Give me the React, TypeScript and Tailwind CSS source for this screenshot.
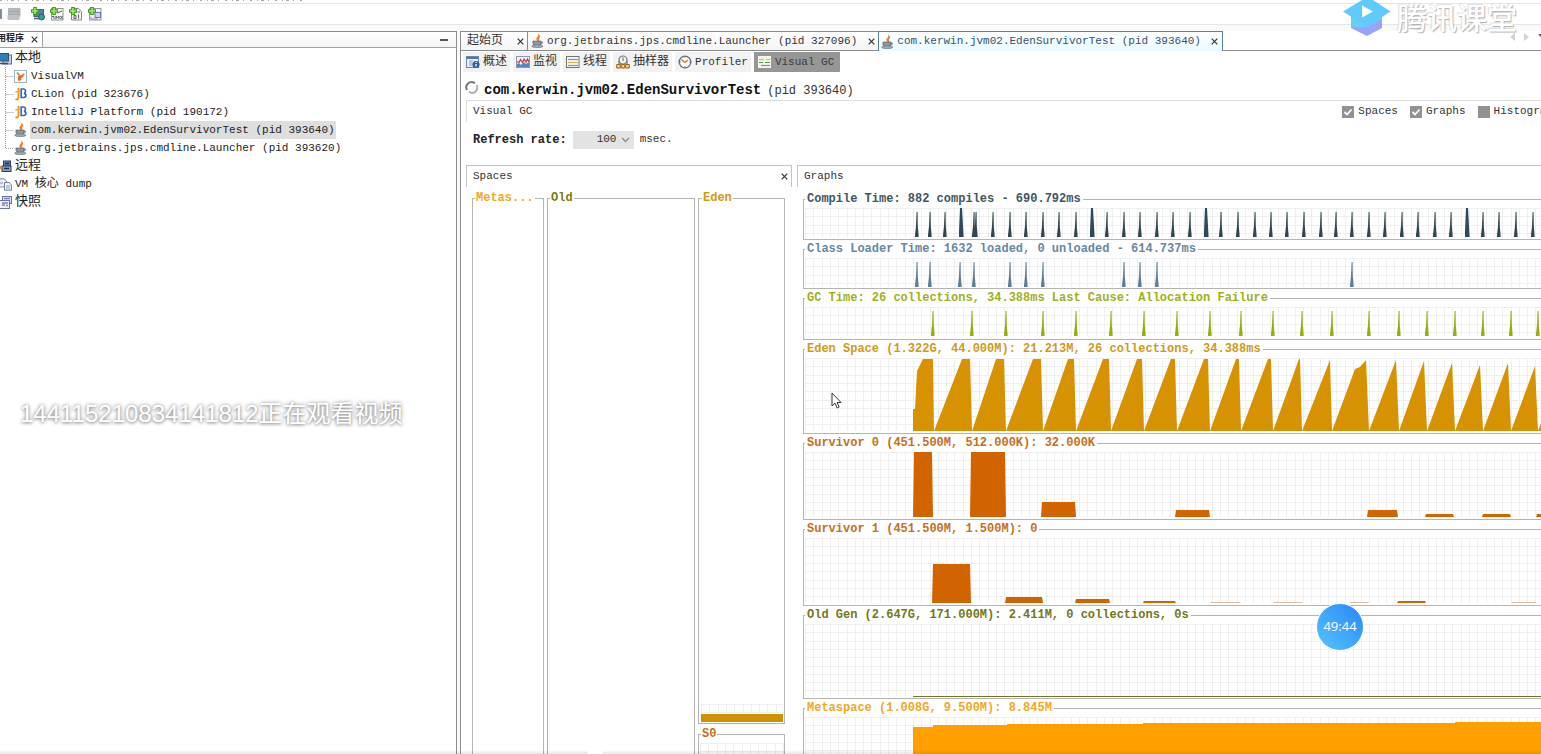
import type { ReactNode } from "react";

const LINE = "border-[#b4b4b4]";

/* ---------- icons ---------- */

const JavaIcon = () => (
  <svg width="13" height="14" viewBox="0 0 13 14" className="shrink-0">
    <path d="M7.5 0.5C9 2 5 3.6 6 5.4c.5.8 1 1.2.8 1.8C9 5.8 7 5 8 3.8 8.8 3 9 1.6 7.5.5z" fill="#ee7a22" stroke="#ee7a22" />
    <path d="M2 7.2h8v1.6c0 1.8-1.6 2.8-4 2.8s-4-1-4-2.8z" fill="#8d9aa5" stroke="#5c6a76" />
    <path d="M10 8c2-.6 2.6 1.4-.6 2" fill="none" stroke="#5c6a76" />
    <ellipse cx="6.3" cy="12.2" rx="5.6" ry="1.3" fill="#a4adb4" stroke="#66727c" strokeWidth="0.7" />
  </svg>
);

const JetBrainsIcon = () => (
  <svg width="13" height="14" viewBox="0 0 13 14" className="shrink-0">
    <path d="M4.5 1v9c0 2-1.5 3-3 2.2" fill="none" stroke="#f09a1c" strokeWidth="2" />
    <path d="M1.5 5.5c2-2 3 0 4.500-1.500" fill="none" stroke="#f0b040" strokeWidth="1.6" />
    <path d="M7.2 2v8.5h2.4c3 0 3-3.8.4-4.2 2.2-.6 2-4.3-.6-4.3z" fill="none" stroke="#3a69b5" strokeWidth="1.7" />
  </svg>
);

const VisualVmIcon = () => (
  <svg width="13" height="13" viewBox="0 0 13 13" className="shrink-0">
    <rect x="0.5" y="0.5" width="12" height="12" fill="#fff" stroke="#9db4c8" />
    <path d="M3 2.500l2.400 2.700M10.400 3.800L8 5.800" stroke="#f0651c" strokeWidth="1.4" />
    <path d="M4.500 5.500l4.500-.5.6 2-2.200.6-.2 2.400-2.400 1.200-1-1.600z" fill="#f0651c" />
  </svg>
);

const LocalIcon = () => (
  <svg width="12" height="13" viewBox="0 0 12 13" className="shrink-0">
    <rect x="3" y="3" width="8.5" height="9" fill="#c9d3e4" stroke="#5b6f95" />
    <rect x="-1" y="1.5" width="9.5" height="7.5" fill="#2d7fb5" stroke="#3c4d6c" />
    <path d="M0 11.5h8" stroke="#3c4d6c" strokeWidth="1.6" />
  </svg>
);

const RemoteIcon = () => (
  <svg width="12" height="13" viewBox="0 0 12 13" className="shrink-0">
    <rect x="3.5" y="1" width="7" height="5" fill="#5f7fae" stroke="#2d3e5e" />
    <rect x="2" y="6" width="9" height="5.5" fill="#8ea3c4" stroke="#2d3e5e" />
    <path d="M4 8.5h5M5 3.5h4" stroke="#1d2c4a" strokeWidth="1.4" />
    <circle cx="0.8" cy="7.5" r="1.6" fill="#d58a2c" />
  </svg>
);

const DumpIcon = () => (
  <svg width="12" height="13" viewBox="0 0 12 13" className="shrink-0">
    <path d="M-1 .8h5L6.500 3v6H-1z" fill="#e9edf4" stroke="#8490a8" />
    <path d="M4.500 4.500h4.500l2.400 2.300v5.400H4.500z" fill="#f4f6fa" stroke="#707d98" />
    <path d="M6 8h4M6 10h4M0 5h3" stroke="#8a97b4" />
  </svg>
);

const SnapshotIcon = () => (
  <svg width="12" height="13" viewBox="0 0 12 13" className="shrink-0">
    <rect x="2.500" y="0.500" width="9" height="7" fill="#dfe4f6" stroke="#6a73a8" />
    <rect x="-0.500" y="4.500" width="10" height="8" fill="#eef0fb" stroke="#6a73a8" />
    <path d="M2 7h6M2 9h3M6 9.500h2M4 2.500h6" stroke="#7b84b8" strokeWidth="1.4" />
  </svg>
);

const AddBadge = () => (
  <>
    <path d="M4 0v8M0 4h8" stroke="#3f9a1e" strokeWidth="3.600" />
    <path d="M4 1v6M1 4h6" stroke="#a8ec62" strokeWidth="1.600" />
  </>
);

const AddHostIcon = () => (
  <svg width="14" height="14" viewBox="0 0 14 14">
    <rect x="3" y="2.500" width="9.500" height="7" fill="#4c83b6" stroke="#4d5f74" />
    <path d="M3 11.500h5" stroke="#4d5f74" strokeWidth="1.6" />
    <circle cx="10.500" cy="10" r="3" fill="#3f9a8e" stroke="#2c5c72" />
    <AddBadge />
  </svg>
);

const AddJmxIcon = () => (
  <svg width="14" height="14" viewBox="0 0 14 14">
    <rect x="1.500" y="1.500" width="11.500" height="11.500" fill="#f4f6f2" stroke="#909890" />
    <path d="M2 9.500h2v2.500M6 12V9l1.500 2L9 9v3M10.500 9l2 3M12.500 9l-2 3M7 6l5-2" fill="none" stroke="#55606a" />
    <AddBadge />
  </svg>
);

const AddDumpIcon = () => (
  <svg width="14" height="14" viewBox="0 0 14 14">
    <path d="M2.500 1.500h7l3 3v8.500h-10z" fill="#f1f4f0" stroke="#7e8a84" />
    <path d="M5 8.500h2v3H5zM9.500 7.500v4M8.500 5h2.500" fill="none" stroke="#58635e" />
    <AddBadge />
  </svg>
);

const AddSnapshotIcon = () => (
  <svg width="14" height="14" viewBox="0 0 14 14">
    <rect x="1.500" y="1.500" width="11.500" height="11.500" fill="#f2f3fa" stroke="#9298ac" />
    <rect x="7" y="5.500" width="5.500" height="5" fill="#cdd5ee" stroke="#6a78a8" />
    <path d="M3 9.500v2.500h7" fill="none" stroke="#8a93b0" />
    <AddBadge />
  </svg>
);

const SaveAllIcon = () => (
  <svg width="14" height="14" viewBox="0 0 14 14">
    <rect x="1" y="1" width="12.500" height="9" rx="1" fill="#b2b5ba" />
    <rect x="0.500" y="8" width="12" height="5" rx="1" fill="#c0c2c6" />
    <path d="M1 4.500h12M1 7.500h12" stroke="#a6aab0" />
  </svg>
);

const OverviewIcon = () => (
  <svg width="14" height="14" viewBox="0 0 14 14">
    <rect x="0.500" y="1.500" width="12" height="11" fill="#eaf0f7" stroke="#6f87a6" />
    <path d="M1 3h11" stroke="#4c75a9" strokeWidth="2" />
    <path d="M3 6h4M3 8h3M3 10h3" stroke="#8da0ba" />
    <circle cx="10" cy="9.500" r="3.600" fill="#2b5da6" />
    <path d="M10 9v2.500M10 7v1" stroke="#fff" strokeWidth="1.3" />
  </svg>
);

const MonitorIcon = () => (
  <svg width="14" height="14" viewBox="0 0 14 14">
    <rect x="0.500" y="1.500" width="13" height="11" fill="#f0f3f7" stroke="#8a9bb0" />
    <path d="M1 12V9l2-1 2 2 3-3 2 2 3-2v5z" fill="#4f86c4" />
    <path d="M1 6.500l2 1 1.500-3 2 3L8 4l2 3 1.500-3L13 7" fill="none" stroke="#d33f35" strokeWidth="1.3" />
  </svg>
);

const ThreadsIcon = () => (
  <svg width="14" height="14" viewBox="0 0 14 14">
    <rect x="0.500" y="1.500" width="12.500" height="11" fill="#f6f7f5" stroke="#6c7680" />
    <path d="M2 4.500h10" stroke="#7d93b8" strokeWidth="1.2" />
    <path d="M2 7.500h10" stroke="#d8b63a" strokeWidth="1.2" />
    <path d="M2 10.500h10" stroke="#7aa858" strokeWidth="1.2" />
  </svg>
);

const SamplerIcon = () => (
  <svg width="14" height="14" viewBox="0 0 14 14">
    <path d="M3 6v4M11 6v4" stroke="#b97a1e" strokeWidth="1.4" />
    <circle cx="7" cy="5" r="4" fill="#f5f5f0" stroke="#6f7680" strokeWidth="1.2" />
    <path d="M7 2.500V6" stroke="#4c5662" />
    <path d="M.7 9.500h3.600v3.500H.7zM5.200 9.500h3.600v3.500H5.200zM9.700 9.500h3.600v3.500H9.700z" fill="#f0d08a" stroke="#9a661c" />
  </svg>
);

const ProfilerIcon = () => (
  <svg width="14" height="14" viewBox="0 0 14 14">
    <circle cx="7" cy="7" r="5.800" fill="#fdfdfb" stroke="#5a6a80" strokeWidth="1.3" />
    <path d="M7 7.500L3.500 4.500M7 7.500l3-2.500" stroke="#e07b28" strokeWidth="1.6" />
    <path d="M7 2v1M7 11v1M2 7h1M11 7h1" stroke="#8a95a5" />
  </svg>
);

const VisualGcIcon = () => (
  <svg width="13" height="12" viewBox="0 0 13 12">
    <rect width="13" height="12" fill="#f7f7f2" />
    <path d="M1 3.500h5M8 3.500h4" stroke="#e3c83c" strokeWidth="1.4" />
    <path d="M1 6.500h4M7 6.500h5" stroke="#4c9a58" strokeWidth="1.2" />
    <path d="M3 9.500h9" stroke="#8e9a3c" strokeWidth="1.2" />
  </svg>
);

const CloseButton = ({ label }: { label: string }) => (
  <button type="button" aria-label={label} className="flex size-3 shrink-0 items-center justify-center text-[#333]">
    <svg width="7" height="7" viewBox="0 0 7 7">
      <path d="M.7.700l5.600 5.600M6.300.700L.700 6.300" stroke="currentColor" strokeWidth="1.200" />
    </svg>
  </button>
);

/* ---------- charts ---------- */

const STEP = 8.3;

// thin grid lines, rounded to whole pixels so that they stay crisp
const gridPath = (width: number, height: number) => {
  let d = "";
  for (let i = 0; i * STEP < width; i++) d += `M${Math.round(i * STEP) + 1.5} 0V${height}`;
  for (let i = 0; i * STEP < height; i++) d += `M1 ${Math.round(i * STEP) + 0.5}H${width}`;
  return d;
};

const Grid = ({ width = 2400, height }: { width?: number; height: number }) => (
  <path d={gridPath(width, height)} stroke="#efefef" fill="none" />
);

const compileSpikes = [
  113, 126, 141, 170, 172, 189, 206, 222, 239, 255, 272, 303, 320, 336, 353, 369, 386, 417, 434, 451, 467,
  483, 500, 517, 532, 548, 565, 581, 598, 614, 631, 647, 679, 695, 712, 729,
];
const compilePeaks = [157, 288, 402, 663];
const loaderSpikes = [113, 126, 156, 170, 206, 222, 239, 320, 336, 353, 548];
const gcTimes = [
  129, 168, 202, 239, 272, 307, 340, 373, 406, 437, 469, 498, 528, 565, 595, 623, 651, 679, 707, 734,
];

const Spikes = ({ at, base, color }: { at: number[]; base: number; color: string }) => (
  <path fill={color} d={at.map((x) => `M${x - 2} ${base}v-2l1-9 .6-14h1l.2 14 .8 9v2z`).join("")} />
);

const Peaks = ({ at, base, color }: { at: number[]; base: number; color: string }) => (
  <path fill={color} d={at.map((x) => `M${x - 2} ${base}v-6l1-23h2l1 18 .6 11z`).join("")} />
);

// [end of ramp, top of ramp, width of the flat part]
const edenTeeth = [
  [168, 1, 8], [202, 1, 8], [239, 1, 8], [272, 1, 6], [307, 1, 6], [340, 1, 5], [373, 1, 4],
  [406, 1, 4], [437, 1, 3], [469, 1, 3], [498, 1, 1], [528, 2, 0],
];
const edenTail = [
  [595, 2], [623, 3], [651, 5], [679, 7], [707, 5], [734, 8], [763, 6], [792, 6], [821, 6],
];

const edenPath = () => {
  let d = "M109 73V51h2l2-38 6-12h10l1 72";
  for (const [end, top, flat] of edenTeeth) d += `L${end - flat - 2} ${top}H${end - 2}L${end} 73`;
  d += "L551 11 556 9 562 2 565 73";
  for (const [end, top] of edenTail) d += `L${end - 3} ${top}L${end} 73`;
  return d + "z";
};

type Bar = [from: number, to: number, top: number];

const s0Bars: Bar[] = [
  [109, 129, 0], [166, 202, 0], [237, 272, 50], [371, 406, 58], [563, 594, 58], [621, 650, 62],
  [678, 707, 62], [732, 764, 62],
];
const s1Bars: Bar[] = [[128, 167, 26], [201, 239, 59], [271, 306, 61], [339, 372, 63], [593, 622, 63]];
const s1Faint: Bar[] = [[406, 437, 64], [469, 499, 64], [546, 565, 64], [707, 733, 64]];

const Bars = ({ bars, color }: { bars: Bar[]; color: string }) => (
  <path fill={color} d={bars.map(([a, b, t]) => `M${a} 65L${a + 1} ${t}H${b - 1}L${b} 65z`).join("")} />
);

type GraphProps = {
  title: string;
  color: string;
  size: string;
  height: number;
  last?: boolean;
  children: ReactNode;
};

const Graph = ({ title, color, size, height, last, children }: GraphProps) => (
  <fieldset className={`min-w-0 shrink-0 border border-r-0 ${LINE} ${last ? "border-b-0" : ""}`}>
    <legend className={`ml-px px-0.5 text-xs leading-[18px] font-bold whitespace-nowrap ${color}`}>{title}</legend>
    <svg className={`block w-full ${size}`} role="img" aria-label={title}>
      <Grid height={height} />
      {children}
    </svg>
  </fieldset>
);

/* ---------- left side ---------- */

const processes = [
  { name: "VisualVM", icon: <VisualVmIcon /> },
  { name: "CLion (pid 323676)", icon: <JetBrainsIcon /> },
  { name: "IntelliJ Platform (pid 190172)", icon: <JetBrainsIcon /> },
  { name: "com.kerwin.jvm02.EdenSurvivorTest (pid 393640)", icon: <JavaIcon />, selected: true },
  { name: "org.jetbrains.jps.cmdline.Launcher (pid 393620)", icon: <JavaIcon /> },
];

const RootRow = ({ icon, children }: { icon: ReactNode; children: ReactNode }) => (
  <div className="flex h-[18px] items-center">
    <span className="w-[15px] shrink-0">{icon}</span>
    <span className="whitespace-nowrap">{children}</span>
  </div>
);

const Applications = () => (
  <aside className="flex w-[457px] shrink-0 flex-col overflow-hidden border-t border-r border-[#8c8c8c] bg-white">
    <div className="flex h-4 shrink-0 items-center justify-between border-b border-[#a0a0a0] bg-linear-to-b from-white to-[#f3f3f3] pr-1">
      <div className="flex h-full items-center gap-1 border-r border-[#a0a0a0] bg-white pr-0.5">
        <span className="-ml-3 text-[9px] font-bold whitespace-nowrap text-[#222]">应用程序</span>
        <CloseButton label="关闭" />
      </div>
      <button type="button" aria-label="最小化" className="flex h-3 w-3 items-center">
        <span className="h-0.5 w-2 bg-[#555]" />
      </button>
    </div>
    <ul className="pt-px text-[11px] text-[#222]">
      <li>
        <RootRow icon={<LocalIcon />}>
          <span className="text-[13px]">本地</span>
        </RootRow>
        <ul>
          {processes.map((p, i) => (
            <li key={p.name} className="flex h-[18px] items-center">
              <svg width="14" height="18" className="shrink-0">
                <path
                  d={i === processes.length - 1 ? "M5.500 0V9.500H14" : "M5.500 0V18M5.500 9.500H14"}
                  fill="none"
                  stroke="#9a9a9a"
                  strokeDasharray="1 1"
                />
              </svg>
              <span className="w-4 shrink-0">{p.icon}</span>
              <span className={`px-px leading-[18px] whitespace-nowrap ${p.selected ? "bg-[#dedede]" : ""}`}>
                {p.name}
              </span>
            </li>
          ))}
        </ul>
      </li>
      <li>
        <RootRow icon={<RemoteIcon />}>
          <span className="text-[13px]">远程</span>
        </RootRow>
      </li>
      <li>
        <RootRow icon={<DumpIcon />}>
          VM <span className="text-xs">核心</span> dump
        </RootRow>
      </li>
      <li>
        <RootRow icon={<SnapshotIcon />}>
          <span className="text-[13px]">快照</span>
        </RootRow>
      </li>
    </ul>
  </aside>
);

/* ---------- right side ---------- */

const DocumentTabs = () => (
  <div className="flex h-5 shrink-0 items-stretch text-[11px] whitespace-nowrap text-[#333]">
    <div className="flex items-center gap-[11px] border-t border-r border-b border-[#8c8c8c] bg-linear-to-b from-white to-[#f4f4f4] pr-px pl-1.5">
      <button type="button" className="text-xs">起始页</button>
      <CloseButton label="关闭" />
    </div>
    <div className="flex items-center gap-2 border-t border-b border-[#8c8c8c] bg-linear-to-b from-white to-[#f4f4f4] pr-px pl-[3px]">
      <button type="button" className="flex items-center gap-[3px]">
        <JavaIcon />
        org.jetbrains.jps.cmdline.Launcher (pid 327096)
      </button>
      <CloseButton label="关闭" />
    </div>
    <div className="flex items-center gap-2 border border-b-0 border-[#5b8299] bg-linear-to-b from-white to-[#e8fbff] pr-px pl-0.5">
      <button type="button" className="flex items-center gap-[3px] text-[#35506a]">
        <JavaIcon />
        com.kerwin.jvm02.EdenSurvivorTest (pid 393640)
      </button>
      <CloseButton label="关闭" />
    </div>
    <div className="flex flex-1 items-start justify-end gap-2 overflow-hidden border-b border-[#8c8c8c] pt-0.5">
      <button type="button" aria-label="向左">
        <svg width="6" height="8"><path d="M5 0v8L0 4z" fill="#d2d2d2" /></svg>
      </button>
      <button type="button" aria-label="向右">
        <svg width="6" height="8"><path d="M0 0v8l5-4z" fill="#d2d2d2" /></svg>
      </button>
      <button type="button" aria-label="列表" className="-mr-1">
        <svg width="7" height="8"><path d="M0 1h7L3.500 5z" fill="#666" /></svg>
      </button>
    </div>
  </div>
);

const views = [
  { name: "概述", icon: <OverviewIcon />, text: "text-xs" },
  { name: "监视", icon: <MonitorIcon />, text: "text-xs" },
  { name: "线程", icon: <ThreadsIcon />, text: "text-xs" },
  { name: "抽样器", icon: <SamplerIcon />, text: "text-xs" },
  { name: "Profiler", icon: <ProfilerIcon />, text: "text-[11px]" },
];

const ViewTabs = () => (
  <div className="flex h-6 shrink-0 items-start gap-[3px] pt-px pl-0.5">
    {views.map((v) => (
      <button
        key={v.name}
        type="button"
        className={`flex h-5 items-center gap-[3px] bg-[#f2f2f2] px-[3px] whitespace-nowrap text-[#333] ${v.text}`}
      >
        {v.icon}
        {v.name}
      </button>
    ))}
    <button type="button" className="flex h-5 items-center gap-1 bg-[#969696] pr-1.5 pl-1 text-[11px] whitespace-nowrap text-[#3c3c3c]">
      <VisualGcIcon />
      Visual GC
    </button>
  </div>
);

const toggles = [
  { name: "Spaces", on: true },
  { name: "Graphs", on: true },
  { name: "Histogram", on: false },
];

const Toggles = () => (
  <div className="-mr-3 flex gap-3">
    {toggles.map((t) => (
      <label key={t.name} className="flex items-center gap-1">
        <span className="grid">
          <input
            type="checkbox"
            defaultChecked={t.on}
            className="peer col-start-1 row-start-1 size-3 appearance-none bg-[#929292]"
          />
          <svg
            viewBox="0 0 12 12"
            className="pointer-events-none invisible col-start-1 row-start-1 size-3 peer-checked:visible"
          >
            <path d="M2.500 6l2.500 2.500 4.500-5" fill="none" stroke="#fff" strokeWidth="1.800" />
          </svg>
        </span>
        {t.name}
      </label>
    ))}
  </div>
);

const spaceLegend = "ml-0.5 px-px text-xs leading-[18px] font-bold";

const Spaces = () => (
  <section className="flex w-[326px] shrink-0 flex-col">
    <div className="flex h-[22px] shrink-0 items-center justify-between border border-b-0 border-[#c4c4c4] pr-px pl-1.5 text-[11px] text-[#333]">
      <h2>Spaces</h2>
      <CloseButton label="关闭 Spaces" />
    </div>
    <div className="flex min-h-0 flex-1 gap-[3px] pt-0.5 pl-1.5">
      <fieldset className={`w-[72px] border border-b-0 ${LINE}`}>
        <legend className={`${spaceLegend} text-[#f0a81e]`}>Metas...</legend>
      </fieldset>
      <fieldset className={`w-[148px] border border-b-0 ${LINE}`}>
        <legend className={`${spaceLegend} text-[#7c7a12]`}>Old</legend>
      </fieldset>
      <div className="flex w-[87px] flex-col gap-px">
        <fieldset className={`flex min-w-0 flex-1 flex-col justify-end border p-px pt-0 ${LINE}`}>
          <legend className={`${spaceLegend} text-[#d09a10]`}>Eden</legend>
          <svg className="block h-[18px] w-full">
            <Grid width={83} height={9} />
            <rect x="1" y="10" width="82" height="8" fill="#cc9200" />
          </svg>
        </fieldset>
        <fieldset className={`h-[29px] min-w-0 border border-b-0 ${LINE}`}>
          <legend className={`${spaceLegend} text-[#c4701c]`}>S0</legend>
          <svg className="block h-[11px] w-full">
            <Grid width={84} height={11} />
          </svg>
        </fieldset>
      </div>
    </div>
  </section>
);

const Graphs = () => (
  <section className="flex min-w-0 flex-1 flex-col overflow-hidden">
    <h2 className="flex h-[22px] shrink-0 items-center border-t border-l border-[#c4c4c4] pl-1.5 text-[11px] text-[#333]">
      Graphs
    </h2>
    <div className="flex min-h-0 flex-1 flex-col overflow-hidden pt-[3px] pl-1.5">
      <Graph title="Compile Time: 882 compiles - 690.792ms" color="text-[#3f5663]" size="h-[31px]" height={29}>
        <Spikes at={compileSpikes} base={29} color="#30474f" />
        <Peaks at={compilePeaks} base={29} color="#2c4a5c" />
      </Graph>
      <Graph title="Class Loader Time: 1632 loaded, 0 unloaded - 614.737ms" color="text-[#6788a0]" size="h-[30px]" height={29}>
        <Spikes at={loaderSpikes} base={29} color="#5d7f94" />
      </Graph>
      <Graph title="GC Time: 26 collections, 34.388ms Last Cause: Allocation Failure" color="text-[#9fb01c]" size="h-8" height={29}>
        <Spikes at={gcTimes} base={29} color="#9aac0c" />
      </Graph>
      <Graph title="Eden Space (1.322G, 44.000M): 21.213M, 26 collections, 34.388ms" color="text-[#cf9a1c]" size="h-[75px]" height={73}>
        <path d={edenPath()} fill="#d69200" />
      </Graph>
      <Graph title="Survivor 0 (451.500M, 512.000K): 32.000K" color="text-[#c4701c]" size="h-[67px]" height={65}>
        <Bars bars={s0Bars} color="#d26400" />
      </Graph>
      <Graph title="Survivor 1 (451.500M, 1.500M): 0" color="text-[#c4701c]" size="h-[67px]" height={65}>
        <Bars bars={s1Bars} color="#d26400" />
        <Bars bars={s1Faint} color="#d8bfa4" />
      </Graph>
      <Graph title="Old Gen (2.647G, 171.000M): 2.411M, 0 collections, 0s" color="text-[#74761a]" size="h-[74px]" height={72}>
        <path d="M109 72.500H2400" stroke="#75752a" />
      </Graph>
      <Graph title="Metaspace (1.008G, 9.500M): 8.845M" color="text-[#f0a81e]" size="h-[74px]" height={72} last>
        <path d="M109 72V10H129V8H203V7H339V6H651V5H2400V72z" fill="#ffa000" />
      </Graph>
    </div>
  </section>
);

const VisualGc = () => (
  <main className="flex min-w-0 flex-1 flex-col border-l border-[#8c8c8c] bg-white">
    <DocumentTabs />
    <ViewTabs />
    <div className="flex h-[25px] shrink-0 items-center gap-1.5 pl-1 whitespace-nowrap">
      <svg width="13" height="15" viewBox="0 0 13 15" className="shrink-0">
        <path d="M2 10A5.300 5.300 0 0 1 7 2l3 1" fill="none" stroke="#777" strokeWidth="2" />
        <path d="M11.500 5A5.300 5.300 0 0 1 7 13l-3-1" fill="none" stroke="#b0b0b0" strokeWidth="2" />
      </svg>
      <h1 className="flex items-baseline gap-1.5 pt-1 text-sm font-bold text-[#111]">
        com.kerwin.jvm02.EdenSurvivorTest
        <span className="text-xs font-normal text-[#333]">(pid 393640)</span>
      </h1>
    </div>
    <div className="flex min-h-0 flex-1 flex-col pl-[5px]">
      <div className="flex h-[22px] shrink-0 items-center justify-between border-t border-l border-[#dcdcdc] pl-1.5 text-[11px] text-[#333]">
        <span>Visual GC</span>
        <Toggles />
      </div>
      <div className="flex h-[43px] shrink-0 items-center gap-1.5 pb-2 pl-[7px] text-[11px] text-[#333]">
        <label htmlFor="rate" className="text-xs font-bold text-[#222]">
          Refresh rate:
        </label>
        <span className="grid items-center">
          <select
            id="rate"
            defaultValue="100"
            className="col-start-1 row-start-1 h-[18px] w-[61px] appearance-none bg-[#e3e3e3] pl-6"
          >
            <option>100</option>
            <option>200</option>
            <option>500</option>
          </select>
          <svg width="9" height="6" className="pointer-events-none col-start-1 row-start-1 mr-1 justify-self-end">
            <path d="M1 1l3.500 3.500L8 1" fill="none" stroke="#8a8a8a" strokeWidth="1.300" />
          </svg>
        </span>
        <span>msec.</span>
      </div>
      <div className="flex min-h-0 flex-1 gap-[5px]">
        <Spaces />
        <Graphs />
      </div>
    </div>
  </main>
);

/* ---------- things floating above the window ---------- */

const Brand = () => (
  <div className="absolute top-0 right-6 flex items-start gap-1.5">
    <svg width="48" height="36" viewBox="0 0 48 36">
      <path d="M8 21v7l16 8 15-8v-9z" fill="#98a3fb" />
      <path d="M8 17v9l8 2 8-1 15-8v-5z" fill="#66cdf9" />
      <path d="M0 11.500L19 0h11l17.500 11.500L24 27z" fill="#5fcbfb" />
      <path d="M19 5.500v12L30 11.500z" fill="#fff" />
    </svg>
    <span className="font-['Noto_Sans_CJK_SC',sans-serif] text-[30px] leading-8 font-medium text-white [text-shadow:1px_1px_1px_#b0b0b0,-1px_-1px_1px_#dcdcdc]">
      腾讯课堂
    </span>
  </div>
);

const Overlays = () => (
  <>
    <Brand />
    <p className="absolute top-[396px] left-5 font-['Liberation_Sans','Noto_Sans_CJK_SC',sans-serif] text-2xl leading-9 whitespace-nowrap text-white [text-shadow:0_0_4px_#8a8a8a,0_1px_3px_#a8a8a8]">
      144115210834141812正在观看视频
    </p>
    <button
      type="button"
      className="absolute top-[603px] right-[177px] size-12 rounded-full border border-white bg-linear-to-tr from-[#55c4ff] to-[#2a86fa] font-['Open_Sans',sans-serif] text-[13px] text-white"
    >
      49:44
    </button>
    <svg width="11" height="17" viewBox="0 0 11 17" className="absolute top-[392px] left-[831px]">
      <path d="M1 1v13l3-2.800 2.200 4.800 2-1-2.200-4.500H10z" fill="#fff" stroke="#333" />
    </svg>
    <div className="absolute inset-x-0 bottom-0 h-1 bg-linear-to-b from-transparent to-black/10" />
    <div className="absolute -bottom-2.5 left-[587px] size-4 rounded-full bg-white" />
  </>
);

const App = () => (
  <div className="relative flex h-screen w-full flex-col overflow-hidden bg-[#fafafa] font-['Liberation_Mono','Noto_Sans_CJK_SC',monospace]">
    <div className="h-[3px] shrink-0 bg-white">
      <svg width="306" height="2" className="block">
        <path d="M0 .5H306" stroke="#a8a8a8" strokeDasharray="2 5 1 3 3 4 1 6" />
      </svg>
    </div>
    <header className="flex h-[22px] shrink-0 items-center gap-[5px] border-y border-[#e6e6e6] bg-white">
      <span className="h-2.5 w-0.5 bg-[#7d8fa3]" />
      <button type="button" aria-label="保存" className="mr-[5px]"><SaveAllIcon /></button>
      <button type="button" aria-label="添加主机"><AddHostIcon /></button>
      <button type="button" aria-label="添加 JMX 连接"><AddJmxIcon /></button>
      <button type="button" aria-label="添加核心 dump"><AddDumpIcon /></button>
      <button type="button" aria-label="添加快照"><AddSnapshotIcon /></button>
    </header>
    <div className="mt-1.5 flex min-h-0 flex-1 gap-[3px]">
      <Applications />
      <VisualGc />
    </div>
    <Overlays />
  </div>
);

export default App;
